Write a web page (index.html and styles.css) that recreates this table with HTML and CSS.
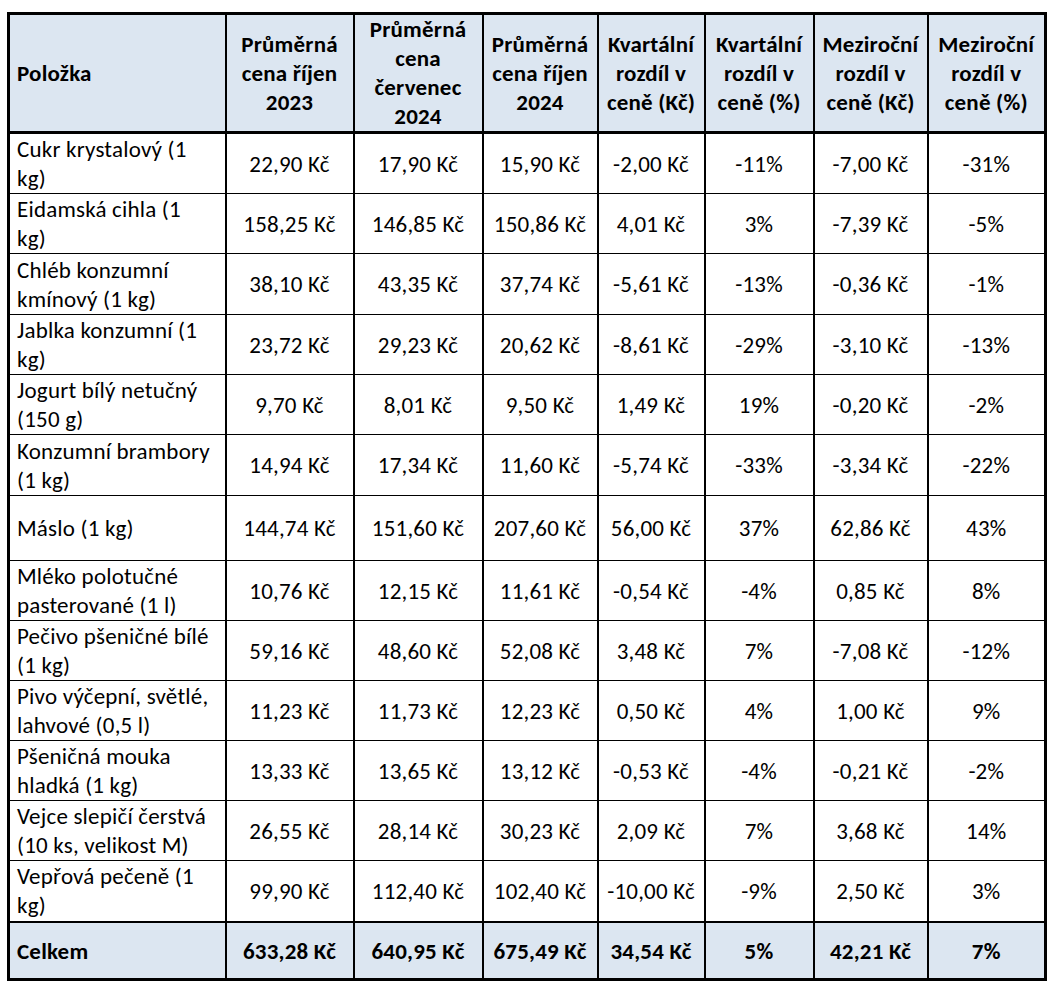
FILE: index.html
```html
<!DOCTYPE html>
<html lang="cs">
<head>
<meta charset="utf-8">
<title>Ceny potravin</title>
<link rel="stylesheet" href="styles.css">
</head>
<body>
<table class="prices">
  <colgroup>
    <col class="c1"><col class="c2"><col class="c3"><col class="c4"><col class="c5"><col class="c6"><col class="c7"><col class="c8">
  </colgroup>
  <thead>
    <tr>
      <th class="name">Položka</th>
      <th>Průměrná<br>cena říjen<br>2023</th>
      <th>Průměrná<br>cena<br>červenec<br>2024</th>
      <th>Průměrná<br>cena říjen<br>2024</th>
      <th>Kvartální<br>rozdíl v<br>ceně (Kč)</th>
      <th>Kvartální<br>rozdíl v<br>ceně (%)</th>
      <th>Meziroční<br>rozdíl v<br>ceně (Kč)</th>
      <th>Meziroční<br>rozdíl v<br>ceně (%)</th>
    </tr>
  </thead>
  <tbody>
    <tr class="plus"><td class="name">Cukr krystalový (1<br>kg)</td><td>22,90 Kč</td><td>17,90 Kč</td><td>15,90 Kč</td><td>-2,00 Kč</td><td>-11%</td><td>-7,00 Kč</td><td>-31%</td></tr>
    <tr><td class="name">Eidamská cihla (1<br>kg)</td><td>158,25 Kč</td><td>146,85 Kč</td><td>150,86 Kč</td><td>4,01 Kč</td><td>3%</td><td>-7,39 Kč</td><td>-5%</td></tr>
    <tr class="plus"><td class="name">Chléb konzumní<br>kmínový (1 kg)</td><td>38,10 Kč</td><td>43,35 Kč</td><td>37,74 Kč</td><td>-5,61 Kč</td><td>-13%</td><td>-0,36 Kč</td><td>-1%</td></tr>
    <tr><td class="name">Jablka konzumní (1<br>kg)</td><td>23,72 Kč</td><td>29,23 Kč</td><td>20,62 Kč</td><td>-8,61 Kč</td><td>-29%</td><td>-3,10 Kč</td><td>-13%</td></tr>
    <tr><td class="name">Jogurt bílý netučný<br>(150 g)</td><td>9,70 Kč</td><td>8,01 Kč</td><td>9,50 Kč</td><td>1,49 Kč</td><td>19%</td><td>-0,20 Kč</td><td>-2%</td></tr>
    <tr class="plus"><td class="name">Konzumní brambory<br>(1 kg)</td><td>14,94 Kč</td><td>17,34 Kč</td><td>11,60 Kč</td><td>-5,74 Kč</td><td>-33%</td><td>-3,34 Kč</td><td>-22%</td></tr>
    <tr class="tall"><td class="name">Máslo (1 kg)</td><td>144,74 Kč</td><td>151,60 Kč</td><td>207,60 Kč</td><td>56,00 Kč</td><td>37%</td><td>62,86 Kč</td><td>43%</td></tr>
    <tr><td class="name">Mléko polotučné<br>pasterované (1 l)</td><td>10,76 Kč</td><td>12,15 Kč</td><td>11,61 Kč</td><td>-0,54 Kč</td><td>-4%</td><td>0,85 Kč</td><td>8%</td></tr>
    <tr><td class="name">Pečivo pšeničné bílé<br>(1 kg)</td><td>59,16 Kč</td><td>48,60 Kč</td><td>52,08 Kč</td><td>3,48 Kč</td><td>7%</td><td>-7,08 Kč</td><td>-12%</td></tr>
    <tr><td class="name">Pivo výčepní, světlé,<br>lahvové (0,5 l)</td><td>11,23 Kč</td><td>11,73 Kč</td><td>12,23 Kč</td><td>0,50 Kč</td><td>4%</td><td>1,00 Kč</td><td>9%</td></tr>
    <tr><td class="name">Pšeničná mouka<br>hladká (1 kg)</td><td>13,33 Kč</td><td>13,65 Kč</td><td>13,12 Kč</td><td>-0,53 Kč</td><td>-4%</td><td>-0,21 Kč</td><td>-2%</td></tr>
    <tr><td class="name">Vejce slepičí čerstvá<br>(10 ks, velikost M)</td><td>26,55 Kč</td><td>28,14 Kč</td><td>30,23 Kč</td><td>2,09 Kč</td><td>7%</td><td>3,68 Kč</td><td>14%</td></tr>
    <tr class="plus"><td class="name">Vepřová pečeně (1<br>kg)</td><td>99,90 Kč</td><td>112,40 Kč</td><td>102,40 Kč</td><td>-10,00 Kč</td><td>-9%</td><td>2,50 Kč</td><td>3%</td></tr>
  </tbody>
  <tfoot>
    <tr><th class="name">Celkem</th><th>633,28 Kč</th><th>640,95 Kč</th><th>675,49 Kč</th><th>34,54 Kč</th><th>5%</th><th>42,21 Kč</th><th>7%</th></tr>
  </tfoot>
</table>
</body>
</html>
```
FILE: styles.css
```css
html, body {
  background: #ffffff;
}
body {
  margin: 12px 0 0 7px;
  font-family: Carlito, Calibri, "Open Sans", sans-serif;
  color: #000;
}
.prices {
  border-collapse: collapse;
  table-layout: fixed;
  width: 1039px;
  border: 3px solid #000;
  font-size: 23px;
  letter-spacing: 0.2px;
  line-height: 29px;
}
.c1 { width: 217px; }
.c2 { width: 128px; }
.c3 { width: 129px; }
.c4 { width: 115px; }
.c5 { width: 107px; }
.c6 { width: 109px; }
.c7 { width: 114px; }
.c8 { width: 118px; }

.prices th,
.prices td {
  border-left: 2px solid #000;
  border-right: 2px solid #000;
  border-top: 1px solid #000;
  border-bottom: 1px solid #000;
  text-align: center;
  vertical-align: middle;
  padding: 0 1px;
  white-space: nowrap;
}
.prices td {
  padding-top: 1px;
}
.prices th {
  font-weight: bold;
  background: #dce6f1;
}
.prices thead tr { height: 118px; }
.prices thead th { border-bottom: 3px solid #000; }
.prices tbody tr { height: 60px; }
.prices tbody tr.plus { height: 61px; }
.prices tbody tr.tall { height: 65px; }
.prices tfoot tr { height: 58px; }
.prices tfoot th { border-top: 2px solid #000; padding-top: 2px; }

.prices .name {
  text-align: left;
  padding-left: 7px;
}
```
